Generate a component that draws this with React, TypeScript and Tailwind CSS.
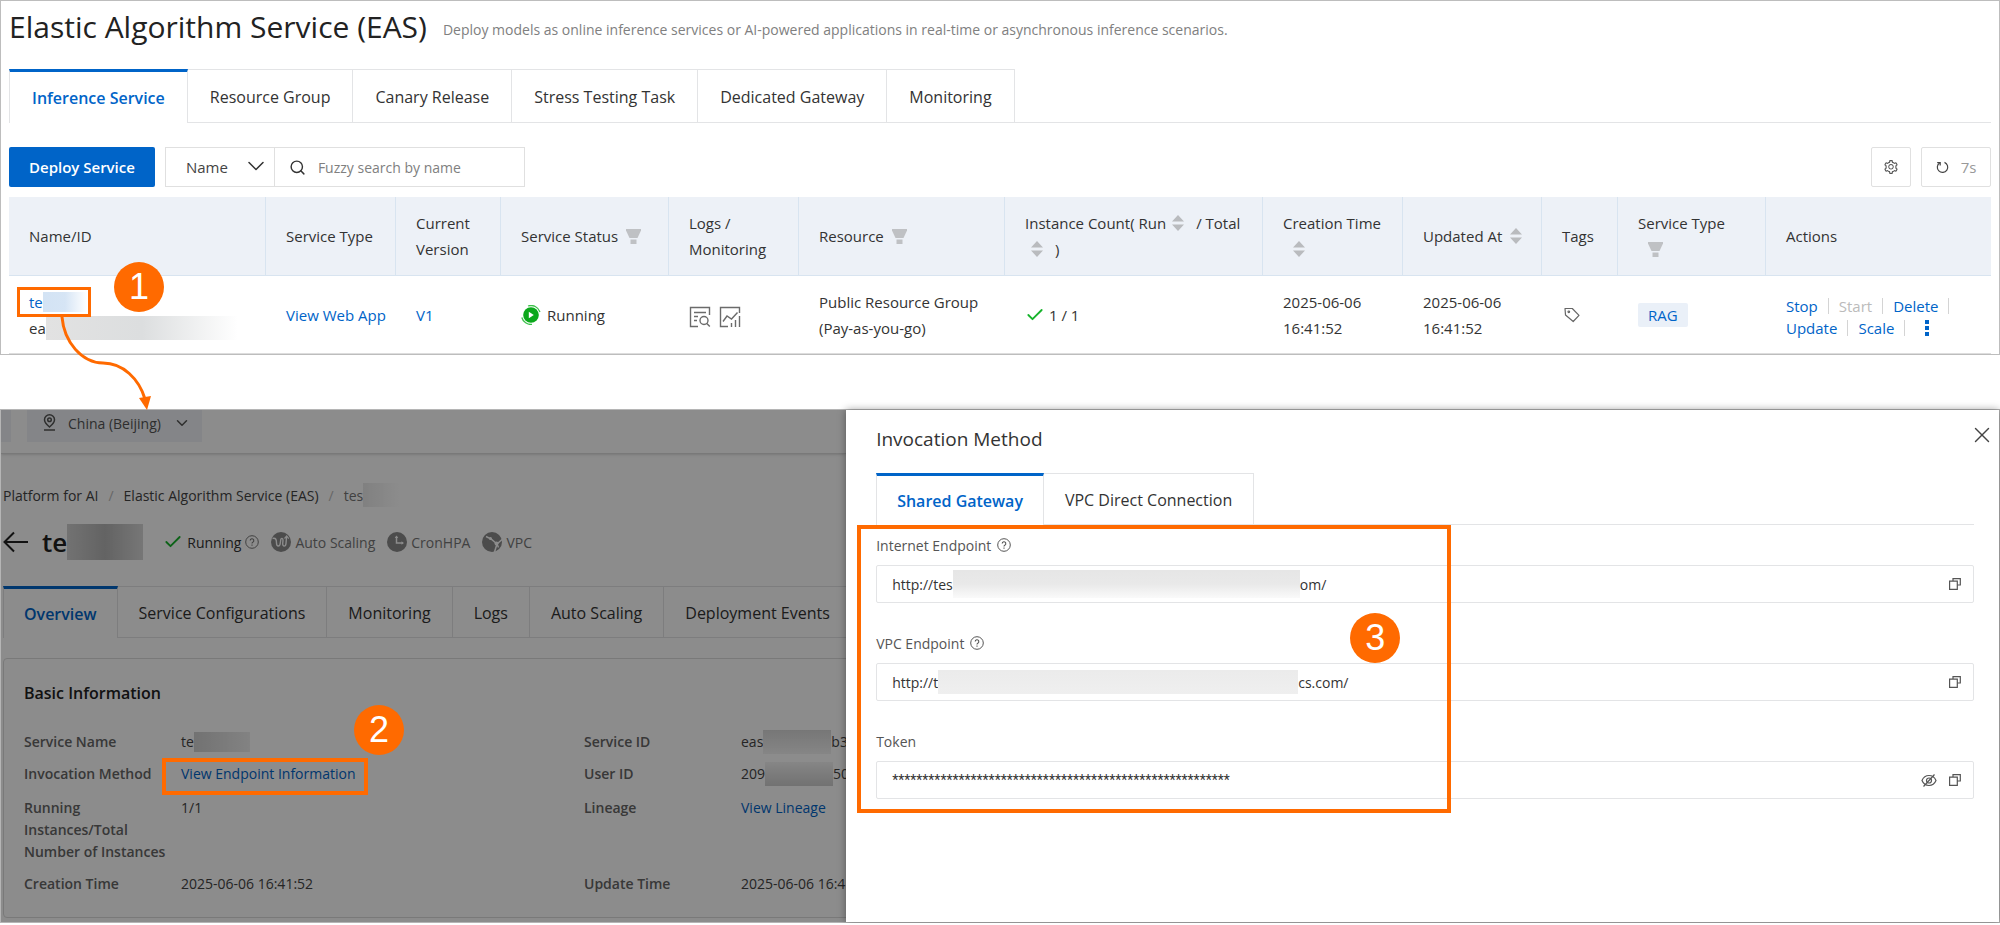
import type { ReactNode } from "react";
import { Check, ChevronDown, Search, X } from "lucide-react";
import { AiOutlineSetting } from "react-icons/ai";

const mainTabs = [
  "Inference Service",
  "Resource Group",
  "Canary Release",
  "Stress Testing Task",
  "Dedicated Gateway",
  "Monitoring",
];

const detailTabs = [
  "Overview",
  "Service Configurations",
  "Monitoring",
  "Logs",
  "Auto Scaling",
  "Deployment Events",
];

const drawerTabs = ["Shared Gateway", "VPC Direct Connection"];

function FilterIcon() {
  return (
    <svg width="15" height="15" viewBox="0 0 15 15" fill="#bfc1c4" className="inline-block shrink-0" aria-hidden="true">
      <path d="M0 0h15v1.500L11.500 9h-8L0 1.500z" />
      <path d="M4.500 10.500h6V15h-6z" />
    </svg>
  );
}

function SortIcon() {
  return (
    <svg width="12" height="16" viewBox="0 0 12 16" fill="#b9bbbe" className="inline-block shrink-0" aria-hidden="true">
      <path d="M6 0l6 6.500H0zM0 9.500h12L6 16z" />
    </svg>
  );
}

function HelpIcon() {
  return (
    <svg width="14" height="14" viewBox="0 0 14 14" fill="none" stroke="currentColor" aria-hidden="true">
      <circle cx="7" cy="7" r="6.300" />
      <path d="M5.200 5.600a1.800 1.800 0 1 1 2.600 1.600c-.6.3-.8.6-.8 1.300M7 9.600v1.100" strokeWidth="1.100" />
    </svg>
  );
}

function RunningIcon() {
  return (
    <svg width="20" height="20" viewBox="0 0 20 20" fill="none" aria-hidden="true">
      <circle cx="10" cy="10" r="7.800" fill="#0ba81b" />
      <path d="M7.800 6.800v6.400l5-3.200z" fill="#fff" />
      <path
        d="M0.800 12.500A9.500 9.500 0 0 0 11 19.400M7 1a9.500 9.500 0 0 1 12 6"
        stroke="#3cc14a"
        strokeWidth="1.300"
      />
    </svg>
  );
}

function LogIcon() {
  return (
    <svg width="22" height="22" viewBox="0 0 22 22" fill="none" stroke="#6b6b6b" strokeWidth="1.400" aria-hidden="true">
      <path d="M20.500 9V1.500h-19v19H9M5 6.500h12M5 10.500h4M5 14.500h3" />
      <circle cx="15" cy="14.500" r="4" />
      <path d="M17.800 17.500l3 3" />
    </svg>
  );
}

function MonitorIcon() {
  return (
    <svg width="22" height="22" viewBox="0 0 22 22" fill="none" stroke="#6b6b6b" strokeWidth="1.400" aria-hidden="true">
      <path d="M20.500 7V1.500h-19v19H9M4 15.500l4-5.500 4.500 3L18.500 6.500" />
      <path d="M12.500 21v-4M16.500 21v-7M20.500 21V10" />
    </svg>
  );
}

function TagIcon() {
  return (
    <svg width="16" height="16" viewBox="0 0 16 16" fill="none" stroke="#666" strokeWidth="1.200" aria-hidden="true">
      <path d="M1 1.500h7.300L15 8.300l-5.800 6.200L1.500 8z" strokeLinejoin="round" />
      <circle cx="4.800" cy="4.800" r="0.800" />
    </svg>
  );
}

function RefreshIcon() {
  return (
    <svg width="13" height="14" viewBox="0 0 13 14" fill="none" stroke="#444" strokeWidth="1.200" aria-hidden="true">
      <path d="M8.500 2.400A5.200 5.200 0 1 1 3.600 2.900" />
      <path d="M1.200 2.600h3V5.600" />
    </svg>
  );
}

function PinIcon() {
  return (
    <svg width="13" height="17" viewBox="0 0 13 17" fill="none" stroke="#555" strokeWidth="1.500" aria-hidden="true">
      <path d="M6.500 13C3.500 10.500 1.500 8.500 1.500 5.800a5 5 0 0 1 10 0c0 2.700-2 4.700-5 7.200zM1 16h11" />
      <circle cx="6.500" cy="5.800" r="1.800" />
    </svg>
  );
}

function BackIcon() {
  return (
    <svg width="25" height="22" viewBox="0 0 25 22" fill="none" stroke="currentColor" strokeWidth="2" aria-hidden="true">
      <path d="M11 1.500L1.500 11l9.500 9.500M1.500 11H25" />
    </svg>
  );
}

function CopyIcon() {
  return (
    <svg width="12" height="12" viewBox="0 0 12 12" fill="none" stroke="#555" strokeWidth="1.200" aria-hidden="true">
      <path d="M0.600 3.200h7.700v8.100H0.600zM4 3V0.700h7.300v6.300H8.500" />
    </svg>
  );
}

function EyeOffIcon() {
  return (
    <svg width="16" height="13" viewBox="0 0 16 13" fill="none" stroke="#555" strokeWidth="1.200" aria-hidden="true">
      <path d="M1 6.500C2.500 3 5 1.500 8 1.500s5.500 1.500 7 5c-1.500 3.500-4 5-7 5s-5.500-1.500-7-5z" />
      <circle cx="8" cy="6.500" r="2.500" />
      <path d="M13.500 0.500L2.500 12.500" />
    </svg>
  );
}

function AutoScalingIcon() {
  return (
    <svg width="20" height="20" viewBox="0 0 20 20" fill="none" aria-hidden="true">
      <circle cx="10" cy="10" r="10" fill="#8a8a8a" />
      <path
        d="M1.500 6.500C5 5.500 5.500 8 5.500 11c0 4 3.500 4 3.800 0l.4-3c.3-2.500 2.500-2 2.300.5l-.3 3c-.2 3.500 3 3.500 3.300 0L15.500 5"
        stroke="#fff"
        strokeWidth="1.400"
      />
      <path d="M13.500 6.500l2.200-2.500 2 2.700" stroke="#fff" strokeWidth="1.200" />
    </svg>
  );
}

function ClockIcon() {
  return (
    <svg width="20" height="20" viewBox="0 0 20 20" fill="none" aria-hidden="true">
      <circle cx="10" cy="10" r="10" fill="#8a8a8a" />
      <path d="M9.500 4.500v6.500H16" stroke="#fff" strokeWidth="1.500" />
      <path d="M7.700 6l1.800-2.500L11.300 6zM14.500 9.200l2.500 1.800-2.500 1.800z" fill="#fff" />
    </svg>
  );
}

function VpcIcon() {
  return (
    <svg width="20" height="20" viewBox="0 0 20 20" fill="none" aria-hidden="true">
      <circle cx="10" cy="10" r="10" fill="#8a8a8a" />
      <path d="M4 4.500l5 2.500 6 5M15 12l5-4.500M15 12l-2.500 8M15 12l1.500 3.500" stroke="#fff" strokeWidth="1.500" />
      <circle cx="8.500" cy="6.500" r="1.500" fill="#fff" />
      <circle cx="14.500" cy="11.500" r="2" fill="#fff" />
    </svg>
  );
}

function StepBadge({ step, className }: { step: number; className: string }) {
  return (
    <span
      className={`absolute z-20 flex h-[50px] w-[50px] items-center justify-center rounded-full bg-[#ff6a00] font-['Liberation_Sans',sans-serif] text-[36px] leading-none text-white ${className}`}
    >
      {step}
    </span>
  );
}

function TabBar({ tabs, wide = false }: { tabs: string[]; wide?: boolean }) {
  return (
    <div role="tablist" className="flex whitespace-nowrap">
      {tabs.map((tab, i) => (
        <button
          key={tab}
          type="button"
          role="tab"
          aria-selected={i === 0}
          className={`shrink-0 border-r border-[#e3e4e6] text-[16px] ${wide ? "h-[54px] px-[22px]" : "h-[52px] px-[21px] first:px-5"} ${
            i === 0
              ? "border-l border-t-[3px] border-t-[#0064c8] font-semibold text-[#0064c8]"
              : "border-y pt-0.5 text-[#333]"
          }`}
        >
          {tab}
        </button>
      ))}
      <div className="flex-1 border-b border-[#e3e4e6]" />
    </div>
  );
}

function Th({ children, className = "" }: { children: ReactNode; className?: string }) {
  return (
    <th className={`border-r border-b border-[#d8e4f0] px-5 text-left font-medium last:border-r-0 ${className}`}>
      {children}
    </th>
  );
}

function Divider() {
  return <span className="h-4 w-px bg-[#d4d4d4]" />;
}

function ServiceList() {
  return (
    <section className="relative border border-[#bdbdbd] px-2">
      <header className="flex items-center gap-4 pt-2">
        <h1 className="text-[30px] leading-9 font-medium text-[#222]">Elastic Algorithm Service (EAS)</h1>
        <p className="pt-1 text-[14px] text-[#808080]">
          Deploy models as online inference services or AI-powered applications in real-time or asynchronous inference
          scenarios.
        </p>
      </header>

      <div className="mt-6">
        <TabBar tabs={mainTabs} wide />
      </div>

      <div className="mt-6 flex h-10 text-[15px]">
        <button type="button" className="rounded-xs bg-[#0064c8] px-5 font-semibold text-white">
          Deploy Service
        </button>
        <div className="relative ml-2.5 w-[110px] border border-[#e0e0e0]">
          <select aria-label="Search field" className="h-full w-full appearance-none bg-transparent pl-5 text-[#444]">
            <option>Name</option>
          </select>
          <ChevronDown size={28} strokeWidth={1.3} className="pointer-events-none absolute top-1 right-1 text-[#333]" />
        </div>
        <label className="flex w-[250px] items-center gap-3 border border-l-0 border-[#e0e0e0] pl-3.5 text-[14px]">
          <Search size={17} strokeWidth={2} className="text-[#333]" />
          <input
            type="search"
            aria-label="Fuzzy search by name"
            placeholder="Fuzzy search by name"
            className="min-w-0 flex-1 outline-none placeholder:text-[#808080]"
          />
        </label>
        <button
          type="button"
          aria-label="Settings"
          className="ml-auto flex w-10 items-center justify-center rounded-xs border border-[#e0e0e0] text-[#555]"
        >
          <AiOutlineSetting size={16} />
        </button>
        <button
          type="button"
          className="ml-2.5 flex w-[70px] items-center justify-center gap-3 rounded-xs border border-[#e0e0e0] text-[#999]"
        >
          <RefreshIcon />
          7s
        </button>
      </div>

      <table className="mt-2.5 w-full table-fixed border-separate border-spacing-0 text-[15px] leading-[26px] text-[#333]">
        <colgroup>
          <col className="w-[257px]" />
          <col className="w-[130px]" />
          <col className="w-[105px]" />
          <col className="w-[168px]" />
          <col className="w-[130px]" />
          <col className="w-[206px]" />
          <col className="w-[258px]" />
          <col className="w-[140px]" />
          <col className="w-[139px]" />
          <col className="w-[76px]" />
          <col className="w-[148px]" />
          <col />
        </colgroup>
        <thead className="h-[79px] bg-[#edf1f7]">
          <tr>
            <Th>Name/ID</Th>
            <Th className="whitespace-nowrap">Service Type</Th>
            <Th>Current Version</Th>
            <Th>
              <span className="flex items-center gap-2 whitespace-nowrap">
                Service Status <FilterIcon />
              </span>
            </Th>
            <Th>
              Logs /<br />
              Monitoring
            </Th>
            <Th>
              <span className="flex items-center gap-2">
                Resource <FilterIcon />
              </span>
            </Th>
            <Th>
              <span className="flex items-center gap-1.5 whitespace-nowrap">
                Instance Count( Run <SortIcon />
                <span className="ml-1.5">/ Total</span>
              </span>
              <span className="flex items-center gap-3 pl-1.5">
                <SortIcon /> )
              </span>
            </Th>
            <Th className="whitespace-nowrap">
              Creation Time
              <span className="flex h-[26px] items-center pl-2.5">
                <SortIcon />
              </span>
            </Th>
            <Th>
              <span className="flex items-center gap-2 whitespace-nowrap">
                Updated At <SortIcon />
              </span>
            </Th>
            <Th>Tags</Th>
            <Th>
              Service Type
              <span className="flex h-[26px] items-center pl-2.5">
                <FilterIcon />
              </span>
            </Th>
            <Th>Actions</Th>
          </tr>
        </thead>
        <tbody>
          <tr className="h-[78px] [&>td]:border-b [&>td]:border-[#ddd] [&>td]:px-5">
            <td className="relative">
              <a href="#" className="flex items-center text-[#0064c8]">
                te
                <span className="h-5 w-11 bg-linear-to-r from-[#d3e3f4] via-[#d6e5f5] to-white" />
              </a>
              <span className="flex items-center">
                ea
                <span className="h-6 w-48 bg-linear-to-r from-[#e2e2e2] via-[#dcdedf] to-white" />
              </span>
              <span className="absolute top-[11px] left-2 h-[30px] w-[74px] border-[3px] border-[#ff6a00]" />
              <StepBadge step={1} className="-top-[14px] left-[105px]" />
            </td>
            <td className="whitespace-nowrap">
              <a href="#" className="text-[#0064c8]">
                View Web App
              </a>
            </td>
            <td>
              <a href="#" className="text-[#0064c8]">
                V1
              </a>
            </td>
            <td>
              <span className="flex items-center gap-1.5">
                <RunningIcon />
                Running
              </span>
            </td>
            <td>
              <span className="flex items-center gap-2 pt-1">
                <LogIcon />
                <MonitorIcon />
              </span>
            </td>
            <td className="whitespace-nowrap">
              Public Resource Group
              <br />
              (Pay-as-you-go)
            </td>
            <td>
              <span className="flex items-center gap-1">
                <Check size={20} strokeWidth={2.2} className="text-[#16b32b]" />1 / 1
              </span>
            </td>
            <td>
              2025-06-06
              <br />
              16:41:52
            </td>
            <td>
              2025-06-06
              <br />
              16:41:52
            </td>
            <td>
              <button type="button" aria-label="Edit tags" className="ml-0.5 block">
                <TagIcon />
              </button>
            </td>
            <td>
              <span className="inline-block rounded-xs bg-[#eaf0f8] px-2.5 leading-6 text-[#0064c8]">RAG</span>
            </td>
            <td className="leading-[22px] text-[#0064c8]">
              <span className="flex items-center gap-2.5 pt-1">
                <a href="#">Stop</a>
                <Divider />
                <button type="button" disabled className="text-[#bbb]">
                  Start
                </button>
                <Divider />
                <a href="#">Delete</a>
                <Divider />
              </span>
              <span className="flex items-center gap-2.5">
                <a href="#">Update</a>
                <Divider />
                <a href="#">Scale</a>
                <Divider />
                <button type="button" aria-label="More actions" className="ml-2.5">
                  <svg width="4" height="16" viewBox="0 0 4 16" fill="#0064c8" aria-hidden="true">
                    <path d="M0 0h4v4H0zM0 6h4v4H0zM0 12h4v4H0z" />
                  </svg>
                </button>
              </span>
            </td>
          </tr>
        </tbody>
      </table>

      {/* link from the service name to the details page */}
      <svg
        width="100"
        height="96"
        viewBox="0 0 100 96"
        fill="none"
        className="pointer-events-none absolute top-[316px] left-[52px] z-20"
        aria-hidden="true"
      >
        <path d="M9 0C11 25 29 46 50 46C70 46 86 62 92 82" stroke="#ff6a00" strokeWidth="3" />
        <path d="M86 81l12-2-4 14z" fill="#ff6a00" />
      </svg>
    </section>
  );
}

function Row({ label, children, className = "" }: { label: ReactNode; children: ReactNode; className?: string }) {
  return (
    <div className={`flex ${className}`}>
      <dt className="w-[157px] shrink-0 font-semibold text-[#666]">{label}</dt>
      <dd className="flex h-[22px] items-center text-[#444]">{children}</dd>
    </div>
  );
}

function ServiceDetail() {
  return (
    <div className="relative w-[42.3%] shrink-0 overflow-hidden bg-white">
      <div className="flex h-11 border-b border-[#ddd] shadow-sm">
        <span className="h-8 w-2.5 bg-[#f0f3f7]" />
        <button
          type="button"
          className="ml-4 flex h-8 w-[175px] items-start gap-3 bg-[#f0f3f7] pt-1 pl-4 text-[14px] leading-5 text-[#555]"
        >
          <PinIcon />
          China (Beijing)
          <ChevronDown size={18} />
        </button>
      </div>

      <nav aria-label="Breadcrumb" className="mt-[30px] flex h-[22px] items-center gap-2.5 pl-0.5 text-[14px] text-[#444]">
        <a href="#">Platform for AI</a>
        <span className="text-[#bbb]">/</span>
        <a href="#">Elastic Algorithm Service (EAS)</a>
        <span className="text-[#bbb]">/</span>
        <span className="flex items-center text-[#777]">
          tes
          <span className="h-6 w-9 bg-linear-to-r from-[#eaeaea] to-white" />
        </span>
      </nav>

      <div className="mt-4 flex h-10 items-center pl-0.5 text-[14px] text-[#777]">
        <button type="button" aria-label="Back" className="text-[#222]">
          <BackIcon />
        </button>
        <h2 className="ml-3.5 flex items-center text-[26px] font-semibold text-[#222]">
          te
          <span className="h-9 w-[76px] bg-linear-to-r from-[#d0d0d0] via-[#b5b5b5] to-[#d8d8d8]" />
        </h2>
        <Check size={20} strokeWidth={2.2} className="ml-5 text-[#16b32b]" />
        <span className="mr-1 ml-1 text-[#333]">Running</span>
        <HelpIcon />
        <span className="ml-3 flex items-center gap-1">
          <AutoScalingIcon />
          Auto Scaling
        </span>
        <span className="ml-3 flex items-center gap-1">
          <ClockIcon />
          CronHPA
        </span>
        <span className="ml-3 flex items-center gap-1">
          <VpcIcon />
          VPC
        </span>
      </div>

      <div className="mt-6 pl-0.5">
        <TabBar tabs={detailTabs} />
      </div>

      <div className="mt-5 mb-1 ml-0.5 h-[260px] w-[1200px] rounded-sm border border-[#ddd] px-5 pt-5 text-[14px] leading-[22px]">
        <h3 className="text-[16px] leading-7 font-semibold text-[#222]">Basic Information</h3>
        <div className="mt-6 flex">
          <dl className="w-[560px]">
            <Row label="Service Name">
              te
              <span className="h-5 w-14 bg-linear-to-r from-[#d0d0d0] to-[#eee]" />
            </Row>
            <Row label="Invocation Method" className="mt-2.5">
              <a href="#" className="text-[#0064c8]">
                View Endpoint Information
              </a>
            </Row>
            <Row
              label={
                <>
                  Running
                  <br />
                  Instances/Total
                  <br />
                  Number of Instances
                </>
              }
              className="mt-3"
            >
              1/1
            </Row>
            <Row label="Creation Time" className="mt-2.5">
              2025-06-06 16:41:52
            </Row>
          </dl>
          <dl>
            <Row label="Service ID">
              eas
              <span className="h-6 w-[68px] bg-linear-to-b from-[#d8d8d8] to-[#f4f4f4]" />
              b3
            </Row>
            <Row label="User ID" className="mt-2.5">
              209
              <span className="h-6 w-[68px] bg-linear-to-b from-[#f4f4f4] to-[#cfcfcf]" />
              502
            </Row>
            <Row label="Lineage" className="mt-3">
              <a href="#" className="text-[#0064c8]">
                View Lineage
              </a>
            </Row>
            <Row label="Update Time" className="mt-[54px]">
              2025-06-06 16:41:52
            </Row>
          </dl>
        </div>
      </div>

      <div className="absolute inset-0 z-10 bg-black/45" />
      <span className="absolute top-[348px] left-[161px] z-20 h-[37px] w-[206px] border-4 border-[#ff6a00]" />
      <StepBadge step={2} className="top-[295px] left-[353px]" />
    </div>
  );
}

function Field({
  id,
  label,
  help = false,
  value,
  mask,
  tail,
  secret = false,
}: {
  id: string;
  label: string;
  help?: boolean;
  value: string;
  mask?: ReactNode;
  tail?: string;
  secret?: boolean;
}) {
  return (
    <div>
      <div className="flex h-6 items-center gap-1.5 text-[#555]">
        <label htmlFor={id} className="font-medium">
          {label}
        </label>
        {help && <HelpIcon />}
      </div>
      <div className="mt-2 flex h-[38px] items-center rounded-xs border border-[#e3e4e6] pr-3 pl-[15px] text-[#333]">
        <input
          id={id}
          readOnly
          value={value}
          className={`outline-none ${mask ? "field-sizing-content" : "flex-1"} ${secret ? "font-['Roboto',sans-serif]" : ""}`}
        />
        {mask}
        {tail}
        <span className="ml-auto flex items-center gap-3">
          {secret && (
            <button type="button" aria-label="Show token">
              <EyeOffIcon />
            </button>
          )}
          <button type="button" aria-label={`Copy ${label}`}>
            <CopyIcon />
          </button>
        </span>
      </div>
    </div>
  );
}

function InvocationDrawer() {
  return (
    <aside className="relative flex-1 bg-white pr-[25px] pl-[30px] text-[14px] shadow-[0_0_8px_rgba(0,0,0,0.4)]">
      <button type="button" aria-label="Close" className="absolute top-3 right-1 text-[#444]">
        <X size={26} strokeWidth={1.3} />
      </button>
      <h2 className="pt-[15px] text-[19px] leading-7 text-[#333]">Invocation Method</h2>
      <div className="mt-5">
        <TabBar tabs={drawerTabs} />
      </div>
      <div className="mt-2 flex flex-col gap-7">
        <Field
          id="internet-endpoint"
          label="Internet Endpoint"
          help
          value="http://tes"
          mask={<span className="h-7 w-[347px] bg-linear-to-b from-[#e6e6e6] via-[#e9e9e9] to-[#fafafa]" />}
          tail="om/"
        />
        <Field
          id="vpc-endpoint"
          label="VPC Endpoint"
          help
          value="http://t"
          mask={<span className="h-6 w-[360px] bg-linear-to-b from-[#ebebeb] to-[#efefef]" />}
          tail="cs.com/"
        />
        <Field id="token" label="Token" value={"*".repeat(56)} secret />
      </div>
      <span className="pointer-events-none absolute top-[115px] left-[11px] h-[288px] w-[594px] border-4 border-[#ff6a00]" />
      <StepBadge step={3} className="top-[203px] left-[504px]" />
    </aside>
  );
}

export default function App() {
  return (
    <main className="overflow-hidden bg-white font-['Open_Sans','Noto_Sans',sans-serif]">
      <ServiceList />
      <section className="mt-[54px] flex border border-[#b5b5b5]">
        <ServiceDetail />
        <InvocationDrawer />
      </section>
    </main>
  );
}
